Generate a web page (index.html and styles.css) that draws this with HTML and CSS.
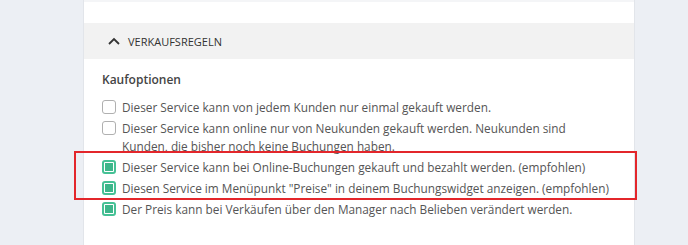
FILE: index.html
```html
<!DOCTYPE html>
<html lang="de">
<head>
  <meta charset="UTF-8" />
  <title>Verkaufsregeln</title>
  <link rel="stylesheet" href="styles.css">
</head>
<body>
  <div class="page">
    <div class="card">
      <div class="card-top"></div>
      <div class="section-head">
        <svg class="chevron" width="12" height="8" viewBox="0 0 12 8">
          <path d="M1 7 L6 2 L11 7" fill="none" stroke="#333" stroke-width="1.8" />
        </svg>
        <span>VERKAUFSREGELN</span>
      </div>
      <div class="section-body">
        <h3>Kaufoptionen</h3>
        <div class="options">
          <label class="option"><span class="box"></span><span>Dieser Service kann von jedem Kunden nur einmal gekauft werden.</span></label>
          <label class="option"><span class="box"></span><span>Dieser Service kann online nur von Neukunden gekauft werden. Neukunden sind Kunden, die bisher noch keine Buchungen haben.</span></label>
          <div class="highlight">
            <label class="option"><span class="box checked"></span><span>Dieser Service kann bei Online-Buchungen gekauft und bezahlt werden. (empfohlen)</span></label>
            <label class="option"><span class="box checked"></span><span>Diesen Service im Menüpunkt "Preise" in deinem Buchungswidget anzeigen. (empfohlen)</span></label>
          </div>
          <label class="option"><span class="box checked"></span><span>Der Preis kann bei Verkäufen über den Manager nach Belieben verändert werden.</span></label>
        </div>
        <h3 class="next">Verfügbarkeit</h3>
      </div>
    </div>
  </div>
</body>
</html>
```

FILE: styles.css
```css
body {
  margin: 0;
  background: #eceff4;
  font-family: 'Open Sans', sans-serif;
  color: #555;
}

.page {
  height: 245px;
  overflow: hidden;
}

.card {
  margin-left: 84px;
  width: 550px;
  min-height: 300px;
  background: #fff;
  box-shadow: -1px 0 0 #e2e5ea, 1px 0 0 #e2e5ea;
}

.card-top {
  height: 21px;
  border-top: 2px solid #f4f5f7;
}

.section-head {
  height: 36px;
  background: #f2f2f2;
  display: flex;
  align-items: center;
  gap: 8px;
  padding-left: 24px;
  font-size: 11px;
  color: #333;
}

.chevron {
  margin-top: -1px;
}

.section-body {
  padding: 11px 23px 0 18px;
}

h3 {
  margin: 0 0 8px;
  font-size: 12px;
  font-weight: 600;
  color: #444;
  line-height: 20px;
}

h3.next {
  margin-top: 25px;
}

.options {
  display: flex;
  flex-direction: column;
  gap: 3px;
}

.option {
  display: flex;
  gap: 6px;
  font-size: 11.8px;
  line-height: 18px;
}

.box {
  flex: none;
  width: 12px;
  height: 12px;
  margin-top: 2px;
  border: 1px solid #b0b0b0;
  border-radius: 3px;
  background: #fff;
}

.box.checked {
  border: 2px solid #45c195;
  width: 10px;
  height: 10px;
  position: relative;
}

.box.checked::after {
  content: "";
  position: absolute;
  left: 1px;
  top: 1px;
  width: 8px;
  height: 8px;
  background: #3db68a;
}

.highlight {
  position: relative;
  display: flex;
  flex-direction: column;
  gap: 3px;
}

.highlight::before {
  content: "";
  position: absolute;
  top: -7px;
  bottom: -3px;
  left: -28px;
  right: -26px;
  border: 2px solid #e3262b;
  pointer-events: none;
}
```
